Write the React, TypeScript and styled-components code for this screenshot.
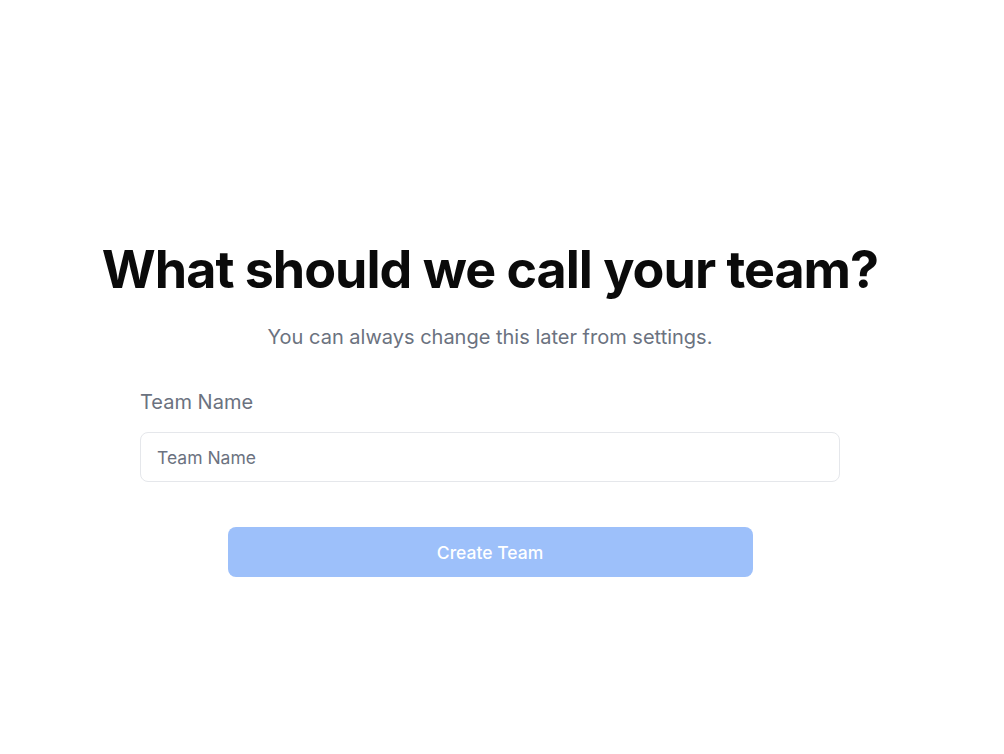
import React from "react";
import styled, { createGlobalStyle } from "styled-components";

const GlobalStyle = createGlobalStyle`
  html, body { margin: 0; padding: 0; background: #ffffff; }
  body { font-family: Inter, "Noto Sans", sans-serif; -webkit-font-smoothing: antialiased; }
  * { box-sizing: border-box; }
`;

const Page = styled.main`
  width: 980px;
  min-height: 754px;
  display: flex;
  flex-direction: column;
  align-items: center;
  padding-top: 240px;
`;

const Heading = styled.h1`
  margin: 0;
  font-size: 52px;
  line-height: 60px;
  font-weight: 700;
  color: #0a0a0a;
  letter-spacing: -1px;
  text-align: center;
`;

const Subtitle = styled.p`
  margin: 23px 0 0;
  font-size: 20px;
  line-height: 28px;
  color: #6b7280;
  text-align: center;
`;

const Form = styled.form`
  width: 700px;
  margin-top: 37px;
  display: flex;
  flex-direction: column;
`;

const Label = styled.label`
  font-size: 20px;
  line-height: 28px;
  color: #6b7280;
  margin-bottom: 16px;
`;

const Input = styled.input`
  width: 100%;
  height: 50px;
  border: 1px solid #e5e7eb;
  border-radius: 8px;
  padding: 0 16px;
  font-family: inherit;
  font-size: 17.5px;
  color: #111827;
  outline: none;
  &::placeholder { color: #6b7280; }
`;

const Button = styled.button`
  align-self: center;
  width: 75%;
  height: 50px;
  margin-top: 45px;
  border: none;
  border-radius: 8px;
  background: #9dc0fa;
  color: #ffffff;
  font-family: inherit;
  font-size: 17.5px;
  font-weight: 500;
  cursor: not-allowed;
`;

export default function App() {
  return (
    <>
      <GlobalStyle />
      <Page>
        <Heading>What should we call your team?</Heading>
        <Subtitle>You can always change this later from settings.</Subtitle>
        <Form onSubmit={(e) => e.preventDefault()}>
          <Label htmlFor="team">Team Name</Label>
          <Input id="team" placeholder="Team Name" />
          <Button type="submit" disabled>Create Team</Button>
        </Form>
      </Page>
    </>
  );
}
